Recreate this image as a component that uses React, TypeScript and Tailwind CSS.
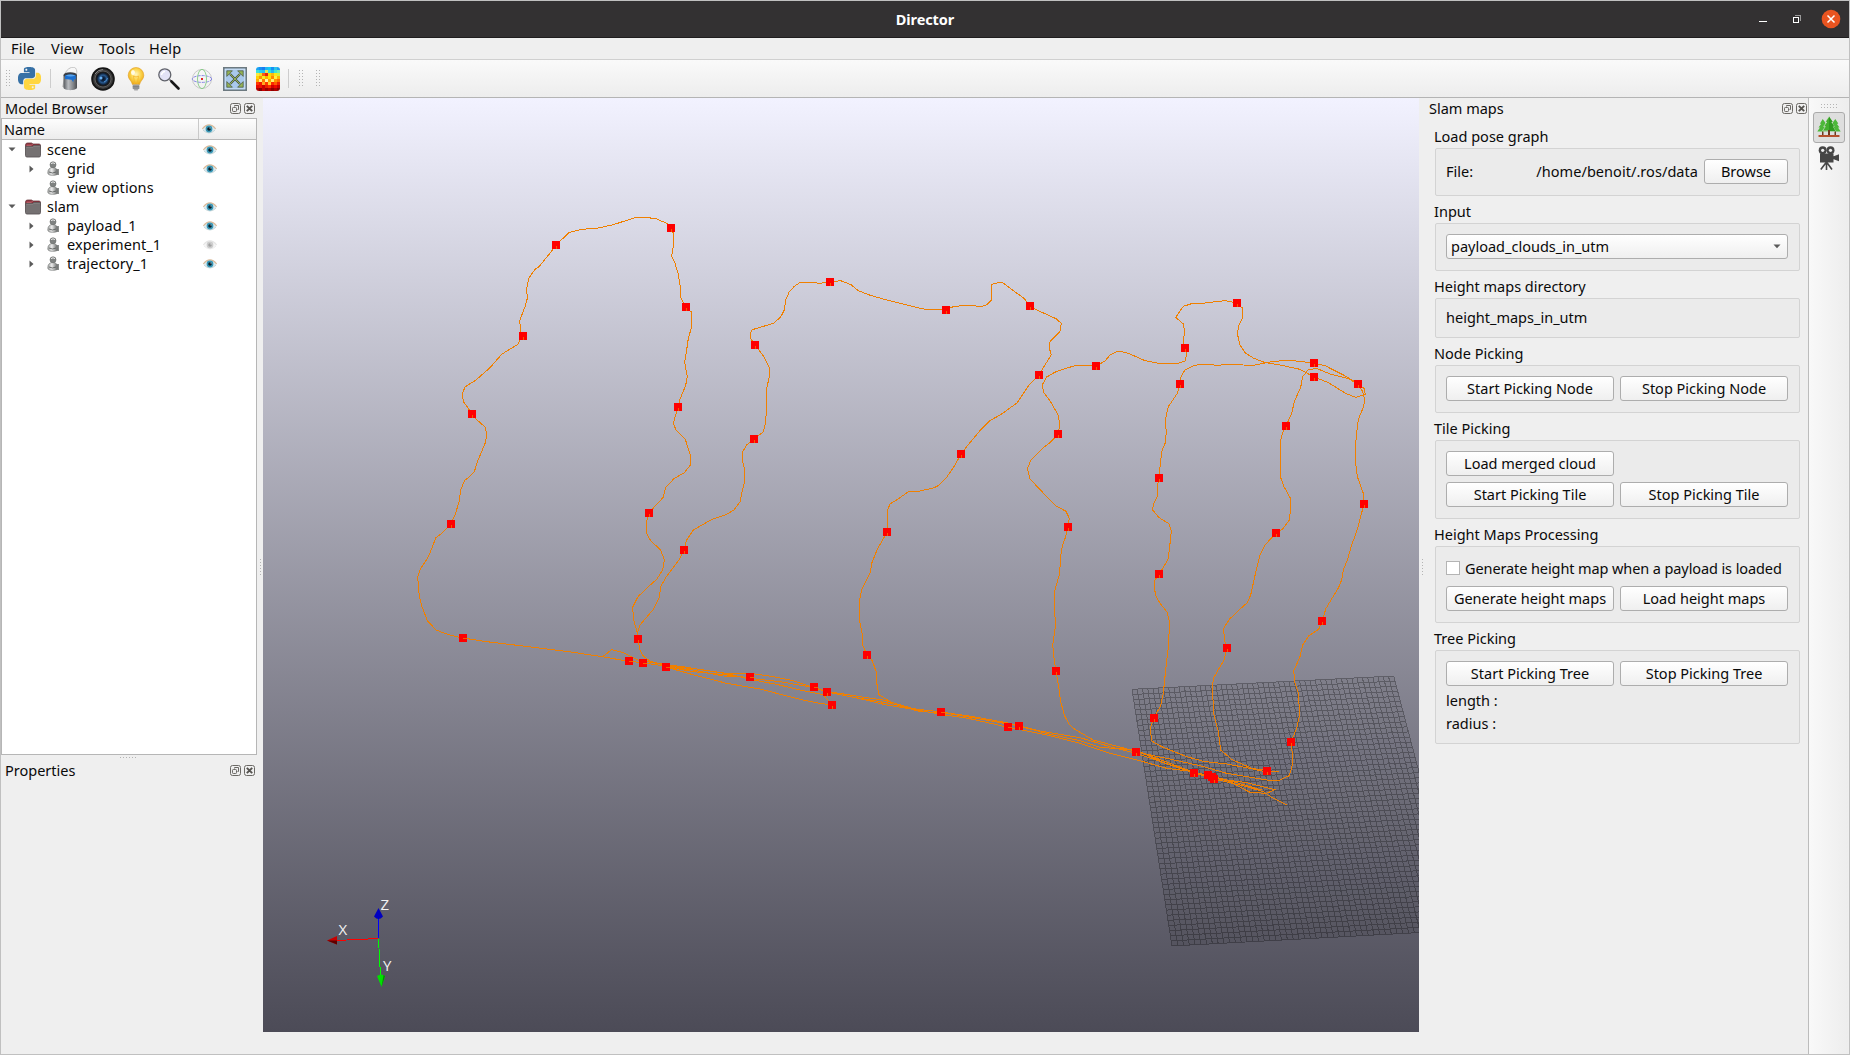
import React from "react";

type Pt = [number, number];

/* ---------- toolbar icons ---------- */

const PythonIcon = () => (
  <svg className="h-[23px] w-[23px]" viewBox="0 0 24 24">
    <path fill="#3771a6" d="M14.25.18l.9.2.73.26.59.3.45.32.34.34.25.34.16.33.1.3.04.26.02.2-.01.13V8.5l-.05.63-.13.55-.21.46-.26.38-.3.31-.33.25-.35.19-.35.14-.33.1-.3.07-.26.04-.21.02H8.77l-.69.05-.59.14-.5.22-.41.27-.33.32-.27.35-.2.36-.15.37-.1.35-.07.32-.04.27-.02.21v3.06H3.17l-.21-.03-.28-.07-.32-.12-.35-.18-.36-.26-.36-.36-.35-.46-.32-.59-.28-.73-.21-.88-.14-1.05-.05-1.23.06-1.22.16-1.04.24-.87.32-.71.36-.57.4-.44.42-.33.42-.24.4-.16.36-.1.32-.05.24-.01h.16l.06.01h8.16v-.83H6.18l-.01-2.75-.02-.37.05-.34.11-.31.17-.28.25-.26.31-.23.38-.2.44-.18.51-.15.58-.12.64-.1.71-.06.77-.04.84-.02 1.27.05zm-6.3 1.98l-.23.33-.08.41.08.41.23.34.33.22.41.09.41-.09.33-.22.23-.34.08-.41-.08-.41-.23-.33-.33-.22-.41-.09-.41.09z" />
    <path fill="#ffd640" d="M21.1 6.11l.28.06.32.12.35.18.36.27.36.35.35.47.32.59.28.73.21.88.14 1.04.05 1.23-.06 1.23-.16 1.04-.24.86-.32.71-.36.57-.4.45-.42.33-.42.24-.4.16-.36.09-.32.05-.24.02-.16-.01h-8.22v.82h5.84l.01 2.76.02.36-.05.34-.11.31-.17.29-.25.25-.31.24-.38.2-.44.17-.51.15-.58.13-.64.09-.71.07-.77.04-.84.01-1.27-.04-1.07-.14-.9-.2-.73-.25-.59-.3-.45-.33-.34-.34-.25-.34-.16-.33-.1-.3-.04-.25-.02-.2.01-.13v-5.34l.05-.64.13-.54.21-.46.26-.38.3-.32.33-.24.35-.2.35-.14.33-.1.3-.06.26-.04.21-.02.13-.01h5.84l.69-.05.59-.14.5-.21.41-.28.33-.32.27-.35.2-.36.15-.36.1-.35.07-.32.04-.28.02-.21V6.07h2.09l.14.01zm-6.47 14.25l-.23.33-.08.41.08.41.23.33.33.23.41.08.41-.08.33-.23.23-.33.08-.41-.08-.41-.23-.33-.33-.23-.41-.08-.41.08z" />
  </svg>
);

const BucketIcon = () => (
  <svg className="h-6 w-6" viewBox="0 0 24 24">
    <defs>
      <linearGradient id="pail" x1="0" x2="1">
        <stop offset="0" stopColor="#55585c" />
        <stop offset=".35" stopColor="#b9bcc0" />
        <stop offset=".7" stopColor="#85888c" />
        <stop offset="1" stopColor="#4c4e52" />
      </linearGradient>
    </defs>
    <path d="M7 7C9 1 15 -1 17.500 1C19 3 19 5 18.500 7" fill="none" stroke="#c4c4c4" strokeWidth="1" />
    <path d="M4 20l2-8v8z" fill="#c9c9c9" />
    <path d="M5.500 8v12.500c0 3.500 13.500 3.500 13.500 0V8z" fill="url(#pail)" />
    <ellipse cx="12.250" cy="8" rx="6.750" ry="2.800" fill="#3b4048" />
    <path d="M7 8.600q5-2.400 10.800 0v3.600l-2 .4l-.6 2.600l-1.600-2.400l-6.600-.7z" fill="#1b6fd0" />
    <path d="M7.500 8.500q5-2 10 0q-5 2-10 0z" fill="#5aa6ee" />
  </svg>
);

const LensIcon = () => (
  <svg className="h-6 w-6" viewBox="0 0 24 24">
    <defs>
      <radialGradient id="glass" cx=".5" cy=".5" r=".5">
        <stop offset="0" stopColor="#07111f" />
        <stop offset=".35" stopColor="#10294a" />
        <stop offset=".6" stopColor="#28598f" />
        <stop offset="1" stopColor="#0a1524" />
      </radialGradient>
    </defs>
    <circle cx="12" cy="12" r="11.800" fill="#161616" />
    <circle cx="12" cy="12" r="10" fill="#3d3d3d" />
    <circle cx="12" cy="12" r="8" fill="#1c1c1d" stroke="#6a6a6a" strokeWidth=".8" />
    <circle cx="12" cy="12" r="6.200" fill="url(#glass)" />
    <circle cx="10" cy="11" r="1.500" fill="#6ab2f5" />
    <path d="M13 15q3-1 3.500-4" stroke="#4b8fd0" fill="none" />
    <path d="M4 7q3-4.500 8-4.500" stroke="#8b8b8b" fill="none" />
  </svg>
);

const BulbIcon = () => (
  <svg className="h-6 w-6" viewBox="0 0 24 24">
    <defs>
      <radialGradient id="bulb" cx=".5" cy=".4" r=".6">
        <stop offset="0" stopColor="#fff6c0" />
        <stop offset=".5" stopColor="#fcd650" />
        <stop offset="1" stopColor="#eba815" />
      </radialGradient>
    </defs>
    <path d="M12 .5a7.800 7.800 0 0 1 7.800 7.800c0 4.200-3.600 5.400-4.200 9.200H8.400C7.800 13.700 4.200 12.500 4.200 8.300A7.800 7.800 0 0 1 12 .5z" fill="url(#bulb)" stroke="#e2a022" strokeWidth=".6" />
    <path d="M9.500 9l1.200 8M14.500 9l-1.200 8M9.500 9q2.500 2 5 0" stroke="#f5b52a" strokeWidth=".8" fill="none" />
    <ellipse cx="9" cy="5.500" rx="2" ry="2.500" fill="#fffbe4" />
    <path d="M8.700 17.500h6.600v4l-1.500 1.200v.9h-3.600v-.9l-1.500-1.200z" fill="#a5a6a8" />
    <path d="M8.700 19.300h6.600M8.700 21h6.600" stroke="#66686b" strokeWidth=".7" />
  </svg>
);

const MagnifierIcon = () => (
  <svg className="h-6 w-6" viewBox="0 0 24 24">
    <path d="M12.500 12.500L14.500 14.500" stroke="#55575e" strokeWidth="1.600" />
    <path d="M14.500 14.500L21.500 21.500" stroke="#171717" strokeWidth="2.600" strokeLinecap="round" />
    <circle cx="7.800" cy="7.800" r="6" fill="#e2e2f6" stroke="#61636b" strokeWidth="1.300" />
    <path d="M4.500 8a3.600 3.600 0 0 1 3.600-3.600" fill="none" stroke="#fff" strokeWidth="1.500" />
  </svg>
);

const SphereIcon = () => (
  <svg className="h-6 w-6" viewBox="0 0 24 24" fill="none">
    <circle cx="12" cy="12" r="9.500" stroke="#bdbdbd" strokeWidth=".8" />
    <ellipse cx="12" cy="12" rx="9.700" ry="3.400" stroke="#7d7de6" strokeWidth=".9" strokeDasharray="3 1" />
    <ellipse cx="12" cy="12" rx="4.500" ry="9.700" stroke="#85cc85" strokeWidth=".9" />
    <rect x="11" y="11" width="2" height="2" fill="#e02424" />
  </svg>
);

const FitIcon = () => (
  <svg className="h-6 w-6" viewBox="0 0 24 24">
    <rect x=".8" y=".8" width="22.400" height="22.400" fill="#a9c9ec" stroke="#6d7a80" strokeWidth="1.600" />
    <rect x="2.200" y="2.200" width="19.600" height="19.600" fill="none" stroke="#d3e4f6" strokeWidth=".8" />
    <path d="M7 7l10 10M17 7L7 17" stroke="#4a5540" strokeWidth="2.200" />
    <path d="M7 7l10 10M17 7L7 17" stroke="#93b355" strokeWidth="1" />
    <path d="M3.800 3.800h5.600l-5.600 5.600zM20.200 3.800v5.600l-5.600-5.600zM3.800 20.200v-5.600l5.600 5.600zM20.200 20.200h-5.600l5.600-5.600z" fill="#93b355" stroke="#4a5540" strokeWidth=".7" />
  </svg>
);

const heatRows = [
  ["#1aa4f0", "#1590f5", "#1a7cf0", "#22b4f0", "#12c8f4", "#1490f5", "#2cc4e8", "#18a0f2"],
  ["#3de0d8", "#2ad0ec", "#28c0f0", "#d8e860", "#35dce0", "#22b8f0", "#40e4d0", "#70ecb0"],
  ["#f8e840", "#f0e020", "#fc6010", "#e82010", "#ffd800", "#f8b810", "#ffe810", "#d0f040"],
  ["#ffd400", "#ff9600", "#f4f020", "#ffb000", "#ffe400", "#ff8800", "#fff040", "#ffb800"],
  ["#ffa800", "#fff080", "#ff7800", "#fff8a0", "#ffa000", "#fff068", "#ff9800", "#ff7000"],
  ["#ff3400", "#f01800", "#ffa820", "#ff3800", "#ffd030", "#ff2800", "#ff5c00", "#f02000"],
  ["#e80800", "#f01000", "#c80000", "#e82000", "#f83000", "#d40000", "#f00800", "#c80000"],
  ["#b00000", "#880000", "#c80000", "#980000", "#b80000", "#900000", "#b00000", "#8c0000"],
];

const HeatIcon = () => (
  <svg className="h-6 w-6 rounded-[3px]" viewBox="0 0 24 24" shapeRendering="crispEdges">
    {heatRows.flatMap((row, r) =>
      row.map((c, i) => <rect key={`${r}-${i}`} x={i * 3} y={r * 3} width="3" height="3" fill={c} />)
    )}
  </svg>
);

/* ---------- small shared pieces ---------- */

const Dots = ({ cols, rows, gap = 3 }: { cols: number; rows: number; gap?: number }) => (
  <svg width={cols * gap} height={rows * gap} shapeRendering="crispEdges" className="shrink-0">
    {Array.from({ length: cols * rows }, (_, i) => (
      <rect key={i} x={(i % cols) * gap} y={Math.floor(i / cols) * gap} width="1" height="1" fill="#b4b4b4" />
    ))}
  </svg>
);

const ToolSep = () => <div className="h-[19px] w-px bg-[#cdcdcd]" />;

const DockButtons = () => (
  <div className="flex gap-[3px]">
    <svg className="h-[11px] w-[11px]" viewBox="0 0 11 11" fill="none" stroke="#6b6965">
      <rect x=".5" y=".5" width="10" height="10" rx="2" />
      <path d="M4.500 3.500v-1h4v4h-1" />
      <rect x="2.500" y="4.500" width="4" height="4" rx=".8" />
    </svg>
    <svg className="h-[11px] w-[11px]" viewBox="0 0 11 11" fill="none" stroke="#6b6965">
      <rect x=".5" y=".5" width="10" height="10" rx="2" />
      <path d="M2.800 2.800l5.400 5.400M8.200 2.800l-5.400 5.400" stroke="#55534f" strokeWidth="1.900" />
    </svg>
  </div>
);

const Eye = ({ off = false }: { off?: boolean }) => (
  <svg className={off ? "h-[10px] w-[14px] opacity-40 grayscale" : "h-[10px] w-[14px]"} viewBox="0 0 14 10">
    <path d="M.5 5.500Q3.500 1.300 7 1.300T13.500 5.500Q10.500 8.800 7 8.800T.5 5.500z" fill="#dcebf0" />
    <path d="M.3 5Q3.500 .9 7 .9T13.700 5" stroke="#d9b998" strokeWidth="1.200" fill="none" />
    <path d="M1 6.200Q4 9 7 9T13 6.200" stroke="#b5c8cc" strokeWidth=".7" fill="none" />
    <circle cx="7" cy="5" r="3.400" fill="#3897b6" />
    <circle cx="7" cy="5" r="1.800" fill="#0b1c25" />
    <circle cx="8" cy="4" r=".6" fill="#d7f0f8" />
  </svg>
);

const FolderIcon = () => (
  <svg className="h-[16px] w-[16px]" viewBox="0 0 16 16">
    <path d="M.5 3q0-2 2-2h4l1.500 1h6q1.500 0 1.500 1.500v3H.5z" fill="#8d2f3b" stroke="#6a3a40" strokeWidth=".8" />
    <path d="M1.500 3.200h5l1-1" stroke="#d98b90" strokeWidth=".7" fill="none" />
    <path d="M.5 4.500H7.500l1-1h7V13.500q0 1.500-1.500 1.500H2q-1.500 0-1.500-1.500z" fill="#757172" stroke="#5b5657" strokeWidth=".9" />
    <path d="M1.400 5.300H8l1-1h5.800" stroke="#8f8b8c" strokeWidth=".6" fill="none" />
  </svg>
);

const FigureIcon = () => (
  <svg className="h-[15px] w-[13px]" viewBox="0 0 13 15">
    <defs>
      <linearGradient id="figure" x1="0" x2="1">
        <stop offset="0" stopColor="#a2a4a3" />
        <stop offset=".4" stopColor="#ececec" />
        <stop offset="1" stopColor="#5b5e5d" />
      </linearGradient>
    </defs>
    <path d="M9 8h3v6H9z" fill="#8a8d8c" />
    <path d="M.8 12q0-5.500 5-5.500t5 5.500q0 2.300-5 2.300t-5-2.300z" fill="url(#figure)" stroke="#7b7e7d" strokeWidth=".7" />
    <circle cx="6" cy="3.800" r="3" fill="#7f8281" stroke="#646867" strokeWidth=".6" />
    <path d="M4 2.600q2-1.600 4 0" stroke="#eee" strokeWidth="1" fill="none" />
    <path d="M2 11q3.500 2 7 0" stroke="#4f5352" strokeWidth=".8" fill="none" />
  </svg>
);

/* ---------- model browser ---------- */

type Row = { name: string; depth: number; arrow?: "down" | "right"; eye?: "on" | "off" };

const rows: Row[] = [
  { name: "scene", depth: 0, arrow: "down", eye: "on" },
  { name: "grid", depth: 1, arrow: "right", eye: "on" },
  { name: "view options", depth: 1 },
  { name: "slam", depth: 0, arrow: "down", eye: "on" },
  { name: "payload_1", depth: 1, arrow: "right", eye: "on" },
  { name: "experiment_1", depth: 1, arrow: "right", eye: "off" },
  { name: "trajectory_1", depth: 1, arrow: "right", eye: "on" },
];

const TreeRow = ({ name, depth, arrow, eye }: Row) => (
  <div className="flex h-[19px] items-center">
    <div className={depth ? "flex w-[201px] items-center pl-[27px]" : "flex w-[201px] items-center pl-[6px]"}>
      <div className={depth ? "w-[18px]" : "w-[17px]"}>
        {arrow === "down" && (
          <svg className="h-[5px] w-2" viewBox="0 0 8 5"><path d="M.5 .5h7L4 4.300z" fill="#5a5a5a" /></svg>
        )}
        {arrow === "right" && (
          <svg className="h-2 w-[5px]" viewBox="0 0 5 8"><path d="M.5 .5v7L4.500 4z" fill="#5a5a5a" /></svg>
        )}
      </div>
      {depth ? <FigureIcon /> : <FolderIcon />}
      <span className={depth ? "ml-[7px] tracking-[0.1px]" : "ml-[6px]"}>{name}</span>
    </div>
    {eye && <Eye off={eye === "off"} />}
  </div>
);

const LeftPanel = () => (
  <aside className="flex w-[255px] shrink-0 flex-col">
    <div className="flex h-5 items-center justify-between pt-px pr-px pl-1">
      <span>Model Browser</span>
      <DockButtons />
    </div>
    <div className="flex h-[637px] w-[256px] flex-col border border-[#b6b6b6] bg-white">
      <div className="flex h-[21px] items-center border-b border-[#b9b9b9] bg-linear-to-b from-[#fdfdfd] to-[#ececec]">
        <span className="w-[196px] pt-px pl-[2px]">Name</span>
        <div className="flex h-full items-center border-l border-[#c9c9c9] pl-[3px]"><Eye /></div>
      </div>
      {rows.map((r) => <TreeRow key={r.name} {...r} />)}
    </div>
    <div className="flex h-[5px] justify-center pt-[2px]"><Dots cols={6} rows={1} /></div>
    <div className="flex h-5 items-center justify-between pr-px pl-1">
      <span>Properties</span>
      <div className="pt-px"><DockButtons /></div>
    </div>
  </aside>
);

/* ---------- 3D view ---------- */

// Each tile holds polylines and node markers in third-of-a-pixel units from its origin.
const tiles: { x: number; y: number; lines: string[]; nodes: Pt[] }[] = [
  {
    x: 400,
    y: 200,
    lines: [
      "189,1314 165,1309 140,1302 108,1290 82,1262 66,1220 58,1190 53,1130 62,1106 84,1072 96,1044 107,1014 126,999 153,972 166,942 177,906 182,870 194,841 208,831 223,815 232,786 256,728 260,705 256,682 228,657 216,642 205,625 190,605 187,580 196,560 228,540 270,503 306,462 354,433 364,412 369,408 362,395 359,362 375,320 382,295 380,265 386,235 405,208 418,199 456,152 468,135 508,97 545,88 595,84 640,74 705,53 735,52 768,56 800,70 813,84 820,100 820,140 815,168 824,186 834,220 841,260 842,293 858,321 874,336 874,384 865,415 860,450 854,488 862,530 857,556 840,598 834,621 820,670 828,690 856,718 871,765 872,794 853,818 822,836 797,862 789,893 768,915 747,939 740,965 740,1000 752,1022 782,1050 793,1080 788,1110 770,1138 745,1160 714,1190 698,1222 701,1260 712,1298 714,1317",
      "714,1317 712,1300 720,1275 760,1228 778,1192 782,1160 798,1132 838,1078 852,1050 860,1020 880,990 932,960 960,950",
      "189,1314 260,1325 360,1337 520,1357 606,1370 687,1384",
    ],
    nodes: [[468, 135], [813, 84], [858, 321], [369, 408], [216, 642], [834, 621], [747, 939], [153, 972], [852, 1050], [189, 1314], [714, 1317], [687, 1383], [729, 1389], [798, 1401]],
  },
  {
    x: 720,
    y: 260,
    lines: [
      "0,770 20,763 42,750 60,726 67,690 73,670 73,625 67,600 68,575 80,555 102,537 130,516 136,490 139,460 139,390 148,350 148,322 130,288 105,255 92,235 91,220 97,209 160,190 182,171 193,150 197,120 208,95 222,80 240,67 270,67 300,70 330,66 362,62 393,74 415,92 445,104 500,120 560,135 615,148 678,150 700,140 735,136 785,139 800,134 815,120 815,73 845,66 880,92 912,115 930,138 955,152 1008,176 1024,190 1020,214 990,245 987,262 994,284 978,310 957,345 925,378 892,428 845,462 810,482 780,512 740,560 723,582 705,615 680,652 655,677 640,684 600,693 565,695 536,716 510,732 503,750 503,800 501,816 488,840 473,865 455,910 451,938 425,990 419,1020 419,1085 427,1125 428,1155 441,1185 457,1202 470,1240 470,1268 477,1304 510,1325 560,1342 600,1352",
      "1110,317 1064,317 1008,335 980,351 966,376 972,398 995,430 1014,465 1020,495 1014,522 990,548 970,563 933,600 922,626 930,657 965,694 1008,738 1038,754 1048,775 1044,801 1037,830 1027,858 1022,890 1019,940 1005,990 1004,1040 1006,1100 998,1155 1002,1195 1008,1233 1016,1280 1022,1325 1034,1368 1046,1390 1060,1405 1080,1417",
    ],
    nodes: [[330, 66], [678, 150], [930, 138], [105, 255], [957, 345], [102, 537], [1014, 522], [723, 582], [501, 816], [1044, 801], [441, 1185], [1008, 1233], [90, 1251], [282, 1281], [321, 1296], [336, 1335], [663, 1356]],
  },
  {
    x: 1080,
    y: 280,
    lines: [
      "0,257 48,258 75,243 90,225 115,213 145,220 195,242 235,250 295,250 316,243 320,220 315,204 311,190 313,150 310,132 287,112 310,79 335,71 375,69 435,62 471,69 488,85 487,115 475,138 473,165 480,195 495,218 520,234 553,247 600,255 660,268 702,291 745,308 797,340 827,352 856,343 852,325 834,312 800,290 735,257 702,249 630,241 580,244 520,256 430,253 420,256 362,253 340,257 315,270 303,290 300,312 292,340 265,380 258,410 257,440 259,455 256,488 245,515 240,560 237,594 232,622 232,648 220,672 218,690 236,712 268,732 274,755 269,800 264,838 248,866 237,882 225,900",
      "834,312 805,296 750,282 710,265 684,270 668,290 662,322 643,365 635,400 618,438 607,460 601,488 601,590 612,620 633,658 633,680 627,722 607,748 588,759 555,795 540,825 530,865 522,900",
      "834,312 848,335 854,360 850,382 835,418 830,460 827,490 827,550 832,590 850,640 852,672 842,710 830,755 815,795 802,840 790,870 785,900",
    ],
    nodes: [[48, 258], [315, 204], [471, 69], [702, 249], [702, 291], [834, 312], [300, 312], [618, 438], [237, 594], [852, 672], [588, 759], [237, 882]],
  },
  {
    x: 1080,
    y: 560,
    lines: [
      "225,60 223,85 228,108 240,130 262,157 269,190 264,270 257,330 250,400 241,440 221,474 211,505 215,543 245,560 320,590 370,604 440,612 510,625 545,633 597,634",
      "522,60 512,105 502,128 475,152 448,178 431,205 433,240 441,264 432,300 400,355 397,390 402,465 415,515 422,570 455,598 515,625 561,632",
      "785,60 776,82 738,145 726,183 716,208 686,228 668,255 660,290 641,333 645,370 655,400 659,465 650,505 633,546 637,580 637,615 628,647 597,661 560,660 440,640 360,617 260,595 168,576",
      "0,517 40,540 168,574 250,602 342,638 384,645 450,665 510,697 560,700 584,689 500,668 400,655",
      "0,533 90,560 168,580 345,640 402,657 500,680 550,695 580,715 622,736",
      "0,542 60,562 168,570 250,608 342,636 450,662 545,690",
      "0,550 90,580 190,605 260,625 340,635 400,655",
    ],
    nodes: [[726, 183], [441, 264], [221, 474], [633, 546], [561, 633], [168, 576], [342, 639], [384, 645], [396, 651], [402, 657]],
  },
  {
    x: 560,
    y: 620,
    lines: [
      "128,110 155,89 190,98 235,120 318,135",
      "234,57 240,90 250,108 270,124 318,135",
      "205,123 249,129 318,138",
      "318,135 370,140 430,150 500,160 570,160 640,170 700,182 762,203 801,214",
      "318,140 400,155 500,165 570,175 660,185 762,203 801,216",
      "318,138 420,148 520,165 580,180 650,193 720,210 790,224 816,255",
      "318,141 400,150 490,168 570,172",
      "318,141 395,163 500,190 600,207 720,238 780,250 816,255",
      "801,214 900,230 970,240 1060,266 1143,276 1240,290 1345,309 1440,333 1560,353",
      "801,216 900,236 980,255 1060,268 1143,283 1230,296 1345,322 1460,345 1560,370",
      "801,216 870,230 1000,252 1080,275 1150,278 1250,295 1377,318 1470,343 1560,362",
    ],
    nodes: [[1345, 321], [1377, 317]],
  },
];

// Nodes that the trajectory leaves to the right instead of downwards.
const sideways = ["189-1314", "687-1383", "729-1389", "798-1401", "282-1281", "90-1251", "663-1356", "1345-321"];

const corner = { tl: [156, 388], tr: [941, 348], bl: [276, 1158], br: [1142, 1111] };
const CELLS = 50;

const mix = (a: number[], b: number[], t: number) =>
  `${(1080 + (a[0] + (b[0] - a[0]) * t) / 3).toFixed(2)} ${(560 + (a[1] + (b[1] - a[1]) * t) / 3).toFixed(2)}`;

const gridPath = Array.from({ length: CELLS + 1 }, (_, i) => {
  const t = i / CELLS;
  return (
    `M${mix(corner.tl, corner.tr, t)}L${mix(corner.bl, corner.br, t)}` +
    `M${mix(corner.tl, corner.bl, t)}L${mix(corner.tr, corner.br, t)}`
  );
}).join("");

const View3D = () => (
  <main className="ml-[7px] h-[934px] w-[1156px] shrink-0 bg-linear-to-b from-[#f2f2ff] to-[#4c4b57]">
    <svg className="block h-full w-full" viewBox="263 98 1156 934" fill="none">
      <path d="M1132 689.300L1393.700 676L1460.700 930.300L1172 946z" fill="#000" fillOpacity=".05" />
      <path d={gridPath} stroke="#000" strokeOpacity=".27" shapeRendering="crispEdges" />
      {tiles.map((t) => (
        <g key={`${t.x}-${t.y}`} transform={`translate(${t.x} ${t.y}) scale(0.33333)`} shapeRendering="crispEdges">
          {t.lines.map((l) => (
            <polyline key={l} points={l} stroke="#f08000" vectorEffect="non-scaling-stroke" />
          ))}
        </g>
      ))}
      {tiles.flatMap((t) =>
        t.nodes.map(([x, y]) => {
          const cx = Math.round(t.x + x / 3);
          const cy = Math.round(t.y + y / 3);
          return (
            <g key={`${t.x + x}-${t.y + y}`} shapeRendering="crispEdges">
              <rect x={cx - 4} y={cy - 4} width="8" height="8" fill="#f00" />
              <path
                d={sideways.includes(`${x}-${y}`) ? `M${cx} ${cy + 0.5}h4` : `M${cx + 0.5} ${cy + 1}v3`}
                stroke="#f06000"
              />
            </g>
          );
        })
      )}
      <g shapeRendering="crispEdges">
        <path d="M378.500 938.500L336 940.500" stroke="#f00" />
        <path d="M378.500 938V914" stroke="#00f" />
        <path d="M378.500 939L380.500 976" stroke="#0f0" />
      </g>
      <path d="M327 940.500l10-4.500v8.500z" fill="#c80000" />
      <path d="M327 940.500l10 0v4z" fill="#5e0000" />
      <path d="M378.500 908l4.500 8.500q-4.500 5-9 0z" fill="#0000c0" />
      <path d="M381.500 987l-4.500-11q4.500-3 8 0z" fill="#00e000" />
      <path d="M381.500 987l2-12l1.500 1z" fill="#009000" />
      <g fill="#f2f2f2" fontFamily="'Open Sans', 'Noto Sans', sans-serif" fontSize="15">
        <text x="338.500" y="934.500">X</text>
        <text x="380.500" y="910">Z</text>
        <text x="383" y="970.500">Y</text>
      </g>
    </svg>
  </main>
);

/* ---------- slam maps panel ---------- */

const Group = ({ title, children }: { title: string; children: React.ReactNode }) => (
  <section>
    <h2 className="flex h-[27px] items-center pt-[3px]">
      <span className="-ml-px">{title}</span>
    </h2>
    <div className="rounded-[2px] border border-[#d3d3d3] bg-[#ebebeb] px-[10px] pt-[10px] pb-[11px]">{children}</div>
  </section>
);

const Btn = ({ children, small = false }: { children: string; small?: boolean }) => (
  <button
    className={
      small
        ? "h-[25px] w-[84px] rounded-[3px] border border-[#adadad] bg-linear-to-b from-white to-[#efefef]"
        : "h-[25px] w-[168px] rounded-[3px] border border-[#adadad] bg-linear-to-b from-white to-[#efefef] whitespace-nowrap"
    }
  >
    {children}
  </button>
);

const SlamPanel = () => (
  <aside className="flex w-[390px] shrink-0 border-r border-[#bcbcbc]">
    <div className="w-[9px] shrink-0 pt-[461px] pl-[3px]"><Dots cols={1} rows={6} /></div>
    <div className="w-[380px] shrink-0">
      <div className="flex h-5 items-center justify-between pt-px pr-px pl-px">
        <span>Slam maps</span>
        <DockButtons />
      </div>
      <div className="mt-[3px] ml-[7px] w-[365px]">
        <Group title="Load pose graph">
          <div className="flex w-[342px] items-center">
            <span>File:</span>
            <span className="mr-[6px] ml-auto tracking-[0.05px]">/home/benoit/.ros/data</span>
            <Btn small>Browse</Btn>
          </div>
        </Group>
        <Group title="Input">
          <div className="flex h-[25px] w-[342px] items-center justify-between rounded-[3px] border border-[#adadad] bg-linear-to-b from-white to-[#efefef] pr-[6px] pl-1">
            <span>payload_clouds_in_utm</span>
            <svg className="h-[5px] w-2" viewBox="0 0 8 5"><path d="M.5 .5h7L4 4.300z" fill="#5a5a5a" /></svg>
          </div>
        </Group>
        <Group title="Height maps directory">
          <div className="flex h-[17px] items-center">height_maps_in_utm</div>
        </Group>
        <Group title="Node Picking">
          <div className="flex gap-[6px]"><Btn>Start Picking Node</Btn><Btn>Stop Picking Node</Btn></div>
        </Group>
        <Group title="Tile Picking">
          <div className="flex flex-col gap-[6px]">
            <Btn>Load merged cloud</Btn>
            <div className="flex gap-[6px]"><Btn>Start Picking Tile</Btn><Btn>Stop Picking Tile</Btn></div>
          </div>
        </Group>
        <Group title="Height Maps Processing">
          <div className="flex h-[29px] items-center gap-[5px] pb-[7px]">
            <div className="h-[14px] w-[14px] shrink-0 border border-[#b4b4b4] bg-white" />
            <span className="tracking-[-0.1px] whitespace-nowrap">Generate height map when a payload is loaded</span>
          </div>
          <div className="flex gap-[6px]"><Btn>Generate height maps</Btn><Btn>Load height maps</Btn></div>
        </Group>
        <Group title="Tree Picking">
          <div className="flex gap-[6px]"><Btn>Start Picking Tree</Btn><Btn>Stop Picking Tree</Btn></div>
          <div className="mt-[6px] flex h-[17px] items-center">length :</div>
          <div className="mt-[6px] flex h-[17px] items-center">radius :</div>
        </Group>
      </div>
    </div>
  </aside>
);

const TreesIcon = () => (
  <svg className="h-6 w-6" viewBox="0 0 24 24">
    <path d="M5 14h1.500v6H5zM17.500 14H19v6h-1.500zM11 14h2v6h-2z" fill="#6b3a20" />
    <path d="M5.700 3L9 7.500L8 8l2 3.500H8.500L11 15.500H.3L3 11.500H1.500L4 8L3 7.500zM18.300 3l3 4.500l-1.300.5l2.500 3.500H21l2.700 4H13l2.500-4H14L16 8l-1-.5z" fill="#4db83a" />
    <path d="M12 .5l3.800 5.500h-1.500l3 4.500h-1.600L18.500 15h-13l2.800-4.500H6.700l3-4.500H8.200z" fill="#43b02e" stroke="#e4e4e4" strokeWidth=".6" />
    <path d="M12 .5l3.800 5.500h-1.500l3 4.500h-1.600L18.500 15H12z" fill="#2f9a20" />
    <rect x="11" y="14" width="2" height="6" fill="#6b3a20" />
    <rect x="1.500" y="19" width="21" height="2" rx=".5" fill="#b4502c" />
  </svg>
);

const CameraIcon = () => (
  <svg className="h-6 w-6" viewBox="0 0 24 24">
    <circle cx="5.700" cy="4.300" r="4" fill="#454545" />
    <circle cx="13.500" cy="4.300" r="4" fill="#454545" />
    <circle cx="5.700" cy="4.300" r="1.600" fill="#f0f0f0" />
    <circle cx="13.500" cy="4.300" r="1.600" fill="#f0f0f0" />
    <path d="M3 7.500h13.500v9H3zM16 10.500l6-2.200v7l-6-2.200z" fill="#454545" />
    <path d="M9.500 16L3.800 23.500M9.500 16v8M9.500 16l5.500 7.500" stroke="#454545" strokeWidth="1.600" fill="none" />
  </svg>
);

const SideBar = () => (
  <nav className="flex h-[956px] w-[39px] shrink-0 flex-col items-center bg-linear-to-r from-[#f9f9f9] to-[#ededed]">
    <div className="mt-[6px] ml-[2px] h-[8px]"><Dots cols={6} rows={2} /></div>
    <div className="flex h-[31px] w-8 items-center justify-center rounded-[3px] border border-[#ababab] bg-[#dedede]"><TreesIcon /></div>
    <div className="mt-[3px]"><CameraIcon /></div>
  </nav>
);

/* ---------- window ---------- */

export default function App() {
  return (
    <div className="flex h-[1055px] w-[1850px] flex-col overflow-hidden border border-[#c0c0c0] bg-[#efefef] font-['Noto_Sans',sans-serif] text-[14.5px] leading-none text-[#0a0a0a]">
      <header className="grid h-[37px] shrink-0 grid-cols-3 items-center border-b border-[#1f1d1e] bg-[#333132]">
        <span className="col-start-2 text-center font-bold tracking-[-0.1px] text-white">Director</span>
        <div className="flex items-center justify-end pr-[8px]">
          <svg className="h-5 w-[90px]" viewBox="0 0 90 20" fill="none">
            <path d="M8 12.500h8" stroke="#fff" />
            <path d="M44 6.500h5.500v5.500" stroke="#9b9a9a" shapeRendering="crispEdges" />
            <rect x="42.500" y="8.500" width="5" height="5" stroke="#fff" shapeRendering="crispEdges" />
            <circle cx="80" cy="10" r="9.300" fill="#e95420" />
            <path d="M76.500 6.500l7 7M83.500 6.500l-7 7" stroke="#fff" strokeWidth="1.500" />
          </svg>
        </div>
      </header>
      <div className="flex h-[22px] shrink-0 items-center border-b border-[#d0d0d0] pl-[10px] tracking-[0.2px]">
        <span className="w-[40px]">File</span>
        <span className="w-[48px]">View</span>
        <span className="w-[50px]">Tools</span>
        <span>Help</span>
      </div>
      <div className="flex h-[38px] shrink-0 items-center border-b border-[#b4b4b4] bg-linear-to-b from-[#fafafa] to-[#ededed] pl-[5px]">
        <Dots cols={2} rows={6} />
        <div className="ml-[6px] w-[24px]"><PythonIcon /></div>
        <div className="mr-[7px] ml-[8px]"><ToolSep /></div>
        <div className="flex gap-[9px]">
          <BucketIcon /><LensIcon /><BulbIcon /><MagnifierIcon /><SphereIcon /><FitIcon /><HeatIcon />
        </div>
        <div className="mr-[10px] ml-[8px]"><ToolSep /></div>
        <Dots cols={2} rows={6} />
        <div className="ml-[11px]"><Dots cols={2} rows={6} /></div>
      </div>
      <div className="flex min-h-0 grow">
        <LeftPanel />
        <div className="-mr-[7px] w-[7px] shrink-0 pt-[461px] pl-[4px]"><Dots cols={1} rows={6} /></div>
        <View3D />
        <SlamPanel />
        <SideBar />
      </div>
    </div>
  );
}
